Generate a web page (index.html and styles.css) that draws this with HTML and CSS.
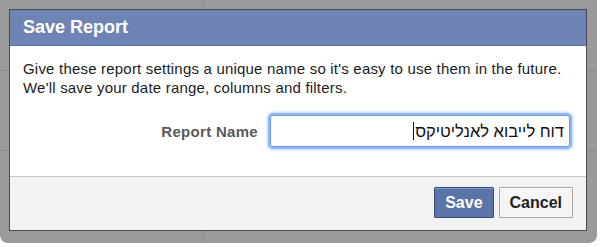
FILE: index.html
```html
<html lang="en">
<head>
    <meta charset="UTF-8">
    <title>Save Report</title>
    <link rel="stylesheet" href="styles.css">
</head>
<body>
<div class="backdrop">
    <div class="dialog">
        <h2 class="dialog-title">Save Report</h2>
        <div class="dialog-body">
            <p class="intro">Give these report settings a unique name so it's easy to use them in the future.<br>
                We'll save your date range, columns and filters.</p>
            <div class="form-row">
                <label class="form-label">Report Name</label>
                <div class="field" dir="rtl">דוח לייבוא לאנליטיקס<span class="caret"></span></div>
            </div>
        </div>
        <div class="dialog-footer">
            <button class="btn btn-primary" type="button">Save</button>
            <button class="btn" type="button">Cancel</button>
        </div>
    </div>
</div>
</body>
</html>
```
FILE: styles.css
```css
body {
    margin: 0;
    background: #fcfcfc;
    font-family: "Liberation Sans", Arial, sans-serif;
}

.backdrop {
    width: 597px;
    box-sizing: border-box;
    padding: 9px 10px 12px 9px;
    background-color: #9a9a9a;
    background-image:
        linear-gradient(#8c8c8c, #8c8c8c),
        linear-gradient(#8c8c8c, #8c8c8c),
        linear-gradient(#8c8c8c, #8c8c8c);
    background-size: 100% 1px, 100% 1px, 1px 100%;
    background-position: 0 70px, 0 150px, 203px 0;
    background-repeat: no-repeat;
    border-radius: 0 0 8px 8px;
}

.dialog {
    border: 1px solid #4a4a4a;
    background: #fff;
}

.dialog-title {
    margin: 0;
    height: 35px;
    padding: 0 13px;
    background: #6d84b4;
    border-bottom: 1px solid #5a71a3;
    color: #fff;
    font-size: 18px;
    font-weight: bold;
    line-height: 34px;
}

.dialog-body {
    padding: 13px 13px 0;
    height: 117px;
    border-bottom: 1px solid #c8c8c8;
}

.intro {
    margin: 0;
    font-size: 15px;
    letter-spacing: 0.2px;
    line-height: 19px;
    color: #1c1c1c;
}

.form-row {
    display: flex;
    align-items: center;
    margin-top: 18px;
}

.form-label {
    flex: 0 0 235px;
    margin-right: 12px;
    text-align: right;
    font-size: 15px;
    letter-spacing: 0.3px;
    font-weight: bold;
    color: #5a5a5a;
}

.field {
    width: 288px;
    height: 30px;
    padding: 0 5px;
    border: 1px solid #6a9be0;
    border-radius: 3px;
    box-shadow: 0 0 0 2px #8fb7f2, 0 0 3px 3px #b9d3f7;
    font-size: 16.5px;
    line-height: 30px;
    color: #111;
    white-space: nowrap;
}

.caret {
    display: inline-block;
    width: 1px;
    height: 18px;
    margin-right: 1px;
    vertical-align: -3px;
    background: #111;
}

.dialog-footer {
    display: flex;
    justify-content: flex-end;
    gap: 5px;
    height: 53px;
    padding: 10px 13px 0;
    box-sizing: border-box;
    background: #f2f2f2;
}

.btn {
    height: 31px;
    padding: 0 10px;
    border: 1px solid #a5a5a5;
    border-radius: 1px;
    background: #f5f5f5;
    box-shadow: inset 0 1px 0 #fff;
    font: bold 16px "Liberation Sans", Arial, sans-serif;
    color: #222;
}

.btn-primary {
    border-color: #304c85;
    background: #5b74a8;
    box-shadow: inset 0 1px 0 #8a9cc2;
    color: #fff;
}
```
